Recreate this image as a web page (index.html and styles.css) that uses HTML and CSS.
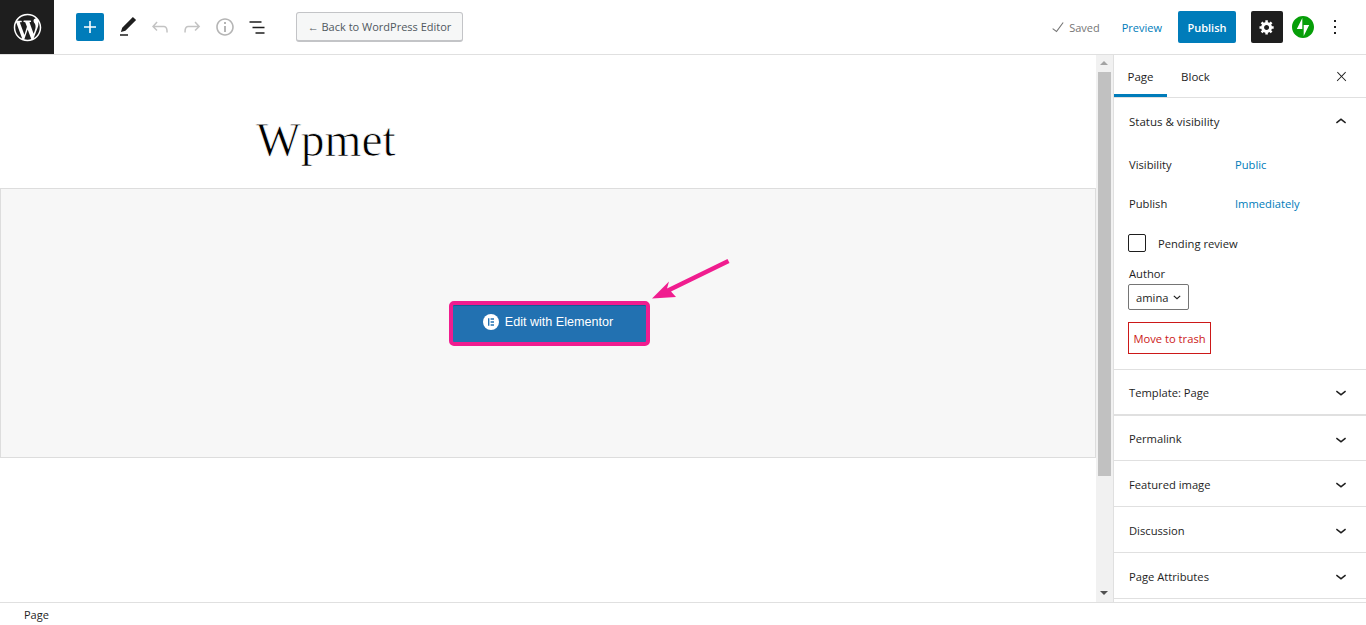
FILE: index.html
```html
<!DOCTYPE html>
<html lang="en">
<head>
<meta charset="utf-8">
<title>Edit Page</title>
<link rel="stylesheet" href="styles.css">
</head>
<body>
<div class="app">
  <header class="topbar">
    <a class="wp-logo"><svg viewBox="-2 -2 24 24" width="33" height="33"><path fill="#fff" d="M20 10c0-5.51-4.49-10-10-10C4.48 0 0 4.49 0 10c0 5.52 4.48 10 10 10 5.51 0 10-4.48 10-10zM7.78 15.37L4.37 6.22c.55-.02 1.17-.08 1.17-.08.5-.06.44-1.13-.06-1.11 0 0-1.45.11-2.37.11-.18 0-.37 0-.58-.01C4.12 2.69 6.87 1.11 10 1.11c2.33 0 4.45.87 6.05 2.34-.68-.11-1.65.39-1.65 1.58 0 .74.45 1.36.9 2.1.35.61.55 1.36.55 2.46 0 1.49-1.4 5-1.4 5l-3.03-8.37c.54-.02.82-.17.82-.17.5-.05.44-1.25-.06-1.22 0 0-1.44.12-2.38.12-.87 0-2.33-.12-2.33-.12-.5-.03-.56 1.2-.06 1.22l.92.08 1.26 3.41zM17.41 10c.24-.64.74-1.87.43-4.25.7 1.29 1.05 2.71 1.05 4.25 0 3.29-1.73 6.24-4.4 7.78.97-2.59 1.94-5.2 2.92-7.78zM6.1 18.09C3.12 16.65 1.11 13.53 1.11 10c0-1.3.23-2.48.72-3.59C3.25 10.3 4.67 14.2 6.1 18.09zm4.03-6.63l2.58 6.98c-.86.29-1.76.45-2.71.45-.79 0-1.57-.11-2.29-.33.81-2.38 1.62-4.74 2.42-7.1z"/></svg></a>
    <div class="tools">
      <button class="add-btn"><svg viewBox="0 0 24 24" width="24" height="24"><path fill="#fff" d="M18 11.2h-5.2V6h-1.6v5.2H6v1.6h5.2V18h1.6v-5.2H18z"/></svg></button>
      <span class="tool"><svg viewBox="0 0 24 24" width="24" height="24"><path fill="#1e1e1e" d="M20.1 5.1L16.9 2 6.2 12.7l-1.3 4.4 4.5-1.3L20.1 5.1zM4 20.8h8v-1.5H4v1.5z"/></svg></span>
      <span class="tool"><svg viewBox="0 0 24 24" width="24" height="24"><path fill="#c3c3c3" d="M18.3 11.7c-.6-.6-1.4-.9-2.3-.9H6.7l2.9-3.3-1.1-1-4.5 5L8.5 16l1-1-2.7-2.7H16c.5 0 .9.2 1.3.5 1 1 1 3.4 1 4.5v.3h1.5v-.2c0-1.5 0-4.3-1.5-5.7z"/></svg></span>
      <span class="tool"><svg viewBox="0 0 24 24" width="24" height="24"><path fill="#c3c3c3" d="M15.6 6.5l-1.1 1 2.9 3.3H8c-.9 0-1.7.3-2.3.9-1.4 1.5-1.4 4.2-1.4 5.6v.2h1.5v-.3c0-1.1 0-3.5 1-4.5.3-.3.7-.5 1.3-.5h9.2L14.5 15l1.1 1.1 4.6-4.6-4.6-5z"/></svg></span>
      <span class="tool info"><svg viewBox="0 0 24 24" width="24" height="24"><path fill="#b5b5b5" d="M12 3.2c-4.8 0-8.8 3.9-8.8 8.8 0 4.8 3.9 8.8 8.8 8.8 4.8 0 8.8-3.9 8.8-8.8 0-4.8-4-8.8-8.8-8.8zm0 16c-4 0-7.2-3.3-7.2-7.2C4.8 8 8 4.8 12 4.8s7.2 3.3 7.2 7.2c0 4-3.2 7.2-7.2 7.2zM11 17h2v-6h-2v6zm0-8h2V7h-2v2z"/></svg></span>
      <span class="tool"><svg viewBox="0 0 24 24" width="24" height="24"><path fill="#1e1e1e" d="M4.5 6.2h12v1.5h-12zM7.5 11.7h12v1.5h-12zM10.5 17.2h9v1.5h-9z"/></svg></span>
      <button class="back-btn">← Back to WordPress Editor</button>
    </div>
    <div class="actions">
      <span class="saved"><svg viewBox="0 0 24 24" width="18" height="18"><path fill="#757575" d="M18.3 5.6L9.9 16.9l-4.6-3.4-.9 1.2 5.8 4.3 9.3-12.6z"/></svg>Saved</span>
      <a class="preview">Preview</a>
      <button class="publish">Publish</button>
      <button class="gear"><svg viewBox="-2 -2 24 24" width="20" height="20"><path fill="#fff" d="M18 12h-2.18c-.17.7-.44 1.35-.81 1.93l1.54 1.54-2.1 2.1-1.54-1.54c-.58.36-1.23.63-1.91.79V19H8v-2.18c-.68-.16-1.33-.43-1.91-.79l-1.54 1.54-2.12-2.12 1.54-1.54c-.36-.58-.63-1.23-.79-1.91H1V9.03h2.17c.16-.7.44-1.35.8-1.94L2.43 5.55l2.1-2.1 1.54 1.54c.58-.37 1.24-.64 1.93-.81V2h3v2.18c.68.16 1.33.43 1.91.79l1.54-1.54 2.12 2.12-1.54 1.54c.36.59.64 1.24.8 1.94H18V12zm-8.5 1.5c1.66 0 3-1.34 3-3s-1.34-3-3-3-3 1.34-3 3 1.34 3 3 3z"/></svg></button>
      <svg class="jetpack" viewBox="0 0 32 32" width="22" height="22"><path fill="#069e08" d="M16,0C7.2,0,0,7.2,0,16s7.2,16,16,16s16-7.2,16-16S24.8,0,16,0z M15,19H7l8-16V19z M17,29V13h8L17,29z"/></svg>
      <svg class="more" viewBox="0 0 24 24" width="24" height="24"><path fill="#1e1e1e" d="M13 19h-2v-2h2v2zm0-6h-2v-2h2v2zm0-6h-2V5h2v2z"/></svg>
    </div>
  </header>
  <div class="workspace">
    <main class="editor">
      <h1 class="post-title">Wpmet</h1>
      <section class="elementor-box">
        <button class="elementor-btn">
          <svg viewBox="0 0 16 16" width="16" height="16"><circle cx="8" cy="8" r="8" fill="#fff"/><path fill="#2271b1" d="M5 4.3h1.4v7.4H5zM7.6 4.3H11v1.4H7.6zM7.6 7.3H11v1.4H7.6zM7.6 10.3H11v1.4H7.6z"/></svg>
          Edit with Elementor
        </button>
        <svg class="pointer" viewBox="0 0 84 48" width="84" height="48"><path fill="#f01d8f" d="M2 40.5L19 23.5 17 30.5 77.5 1 79.5 5 21 33.5 26 39z"/></svg>
      </section>
    </main>
    <div class="scrollbar">
      <span class="arrow up"></span>
      <span class="thumb"></span>
      <span class="arrow down"></span>
    </div>
    <aside class="sidebar">
      <nav class="tabs">
        <a class="tab active">Page</a>
        <a class="tab">Block</a>
        <svg class="close" viewBox="0 0 24 24" width="15" height="15"><path fill="#1e1e1e" d="M13 11.8l6.1-6.3-1-1-6.1 6.2-6.1-6.2-1 1 6.1 6.3-6.5 6.7 1 1 6.5-6.6 6.5 6.6 1-1z"/></svg>
      </nav>
      <section class="panel open">
        <div class="panel-head"><span>Status &amp; visibility</span><svg viewBox="0 0 24 24" width="22" height="22"><path fill="#1e1e1e" d="M6.5 12.4L12 8l5.5 4.4-.9 1.2L12 10l-4.5 3.6-1-1.2z"/></svg></div>
        <div class="row"><span class="label">Visibility</span><a class="link">Public</a></div>
        <div class="row second"><span class="label">Publish</span><a class="link">Immediately</a></div>
        <label class="check"><span class="box"></span>Pending review</label>
        <div class="author">Author</div>
        <div class="select">amina<svg viewBox="0 0 10 6" width="8" height="5"><path fill="none" stroke="#1e1e1e" stroke-width="1.4" d="M1 1l4 3.6L9 1"/></svg></div>
        <button class="trash">Move to trash</button>
      </section>
      <section class="panel thick"><div class="panel-head"><span>Template: Page</span><svg viewBox="0 0 24 24" width="22" height="22"><path fill="#1e1e1e" d="M17.5 11.6L12 16l-5.5-4.4.9-1.2L12 14l4.5-3.6 1 1.2z"/></svg></div></section>
      <section class="panel"><div class="panel-head"><span>Permalink</span><svg viewBox="0 0 24 24" width="22" height="22"><path fill="#1e1e1e" d="M17.5 11.6L12 16l-5.5-4.4.9-1.2L12 14l4.5-3.6 1 1.2z"/></svg></div></section>
      <section class="panel"><div class="panel-head"><span>Featured image</span><svg viewBox="0 0 24 24" width="22" height="22"><path fill="#1e1e1e" d="M17.5 11.6L12 16l-5.5-4.4.9-1.2L12 14l4.5-3.6 1 1.2z"/></svg></div></section>
      <section class="panel"><div class="panel-head"><span>Discussion</span><svg viewBox="0 0 24 24" width="22" height="22"><path fill="#1e1e1e" d="M17.5 11.6L12 16l-5.5-4.4.9-1.2L12 14l4.5-3.6 1 1.2z"/></svg></div></section>
      <section class="panel"><div class="panel-head"><span>Page Attributes</span><svg viewBox="0 0 24 24" width="22" height="22"><path fill="#1e1e1e" d="M17.5 11.6L12 16l-5.5-4.4.9-1.2L12 14l4.5-3.6 1 1.2z"/></svg></div></section>
    </aside>
  </div>
  <footer class="statusbar">Page</footer>
</div>
</body>
</html>
```

FILE: styles.css
```css
* { box-sizing: border-box; }
html, body { margin: 0; height: 100%; overflow: hidden; }
body { font-family: "Open Sans", "Noto Sans", sans-serif; font-size: 11.2px; color: #1e1e1e; background: #fff; }
button { font-family: inherit; font-size: inherit; cursor: pointer; }
svg { display: block; flex: none; }

.app { display: flex; flex-direction: column; height: 625px; }

.topbar { display: flex; align-items: center; height: 55px; flex: none; border-bottom: 1px solid #e0e0e0; }
.wp-logo { display: flex; align-items: center; justify-content: center; width: 54px; height: 54px; background: #1e1e1e; }
.tools { display: flex; align-items: center; margin-left: 22px; }
.add-btn { display: flex; align-items: center; justify-content: center; width: 28px; height: 28px; padding: 0; border: 0; border-radius: 2px; background: #007cba; }
.tool { display: flex; width: 32px; justify-content: center; }
.tool.info { margin-left: 1px; }
.add-btn + .tool { margin-left: 8px; }
.back-btn { margin-left: 23px; width: 167px; height: 30px; padding: 0; border: 1px solid #c3c4c7; border-bottom-width: 2px; border-radius: 3px; background: #f6f7f7; color: #50575e; font-size: 11px; white-space: nowrap; }

.actions { display: flex; align-items: center; margin-left: auto; }
.saved { display: flex; align-items: center; gap: 2px; color: #757575; font-size: 11px; }
.preview { margin-left: 22px; color: #007cba; font-size: 11px; }
.publish { margin-left: 16px; width: 58px; height: 32px; padding: 0; border: 0; border-radius: 2px; background: #007cba; color: #fff; font-weight: 600; font-size: 11px; }
.gear { display: flex; align-items: center; justify-content: center; margin-left: 15px; width: 32px; height: 32px; padding: 0; border: 0; border-radius: 2px; background: #1e1e1e; }
.jetpack { margin-left: 9px; }
.more { margin-left: 9px; margin-right: 19px; }

.workspace { display: flex; flex: 1; min-height: 0; }
.editor { width: 1096px; flex: none; }
.post-title { margin: 0; height: 133px; padding: 55px 0 0 256px; font-family: "Liberation Serif", serif; font-weight: 400; font-size: 47.5px; line-height: 60px; color: #000; -webkit-text-stroke: 0.75px #fff; }
.elementor-box { position: relative; display: flex; align-items: center; justify-content: center; height: 270px; background: #f7f7f7; border: 1px solid #ddd; }
.elementor-btn { display: flex; align-items: center; justify-content: center; gap: 6px; width: 201px; height: 45px; margin: 1px 0 0 3px; padding: 0 3px 3px 0; border: 4px solid #f01d8f; border-radius: 5px; background: #2271b1; color: #fff; font-family: "Liberation Sans", Arial, sans-serif; font-size: 12.6px; box-shadow: inset 0 1px 0 #135e96; }
.pointer { position: absolute; left: 649px; top: 69px; }

.scrollbar { display: flex; flex-direction: column; width: 17px; flex: none; background: #f1f1f1; }
.arrow { position: relative; height: 17px; flex: none; }
.arrow::after { content: ""; position: absolute; left: 4px; border-left: 4px solid transparent; border-right: 4px solid transparent; }
.arrow.up::after { top: 6px; border-bottom: 4px solid #a3a3a3; }
.arrow.down { margin-top: auto; }
.arrow.down::after { top: 6px; border-top: 4px solid #505050; }
.thumb { height: 404px; margin: 0 2px; background: #c1c1c1; }

.sidebar { flex: 1; min-width: 0; border-left: 1px solid #e0e0e0; overflow: hidden; }
.tabs { position: relative; display: flex; height: 43px; border-bottom: 1px solid #e0e0e0; }
.tab { display: flex; align-items: center; justify-content: center; color: #1e1e1e; font-size: 11.5px; }
.tab:first-child { width: 53px; }
.tab + .tab { width: 57px; }
.tab.active { box-shadow: inset 0 -3px 0 #007cba; }
.close { position: absolute; right: 17px; top: 14px; }

.panel { border-bottom: 1px solid #e0e0e0; }
.panel.thick { border-bottom-width: 2px; }
.panel-head { display: flex; align-items: center; justify-content: space-between; height: 45px; padding: 1px 14px 0 15px; color: #1e1e1e; }
.panel.thick .panel-head { height: 44px; padding-top: 0; }
.panel.thick + .panel .panel-head { height: 44px; padding-top: 1px; }
.panel.open { height: 272px; padding: 0 14px; }
.panel.open .panel-head { height: 48px; padding: 0 0 0 1px; font-size: 11.5px; }
.panel.open .panel-head span { margin-top: -2px; }
.row { display: flex; height: 20px; align-items: center; padding-left: 1px; margin-top: 8px; }
.row.second { margin-top: 19px; }
.label { width: 106px; }
.link { color: #007cba; }
.check { display: flex; align-items: center; gap: 12px; margin-top: 21px; height: 18px; }
.box { width: 18px; height: 18px; border: 1px solid #1e1e1e; border-radius: 2px; background: #fff; }
.author { margin-top: 12px; height: 20px; line-height: 20px; padding-left: 1px; }
.select { display: flex; align-items: center; justify-content: space-between; width: 61px; height: 26px; margin-top: 0; padding: 0 7px; border: 1px solid #757575; border-radius: 2px; }
.trash { display: block; margin-top: 12px; width: 83px; height: 32px; padding: 0; border: 1px solid #cc1818; border-radius: 0; background: #fff; color: #cc1818; font-size: 11.2px; white-space: nowrap; }

.statusbar { height: 23px; flex: none; display: flex; align-items: center; padding-left: 24px; border-top: 1px solid #e0e0e0; color: #1e1e1e; font-size: 11px; }
```
